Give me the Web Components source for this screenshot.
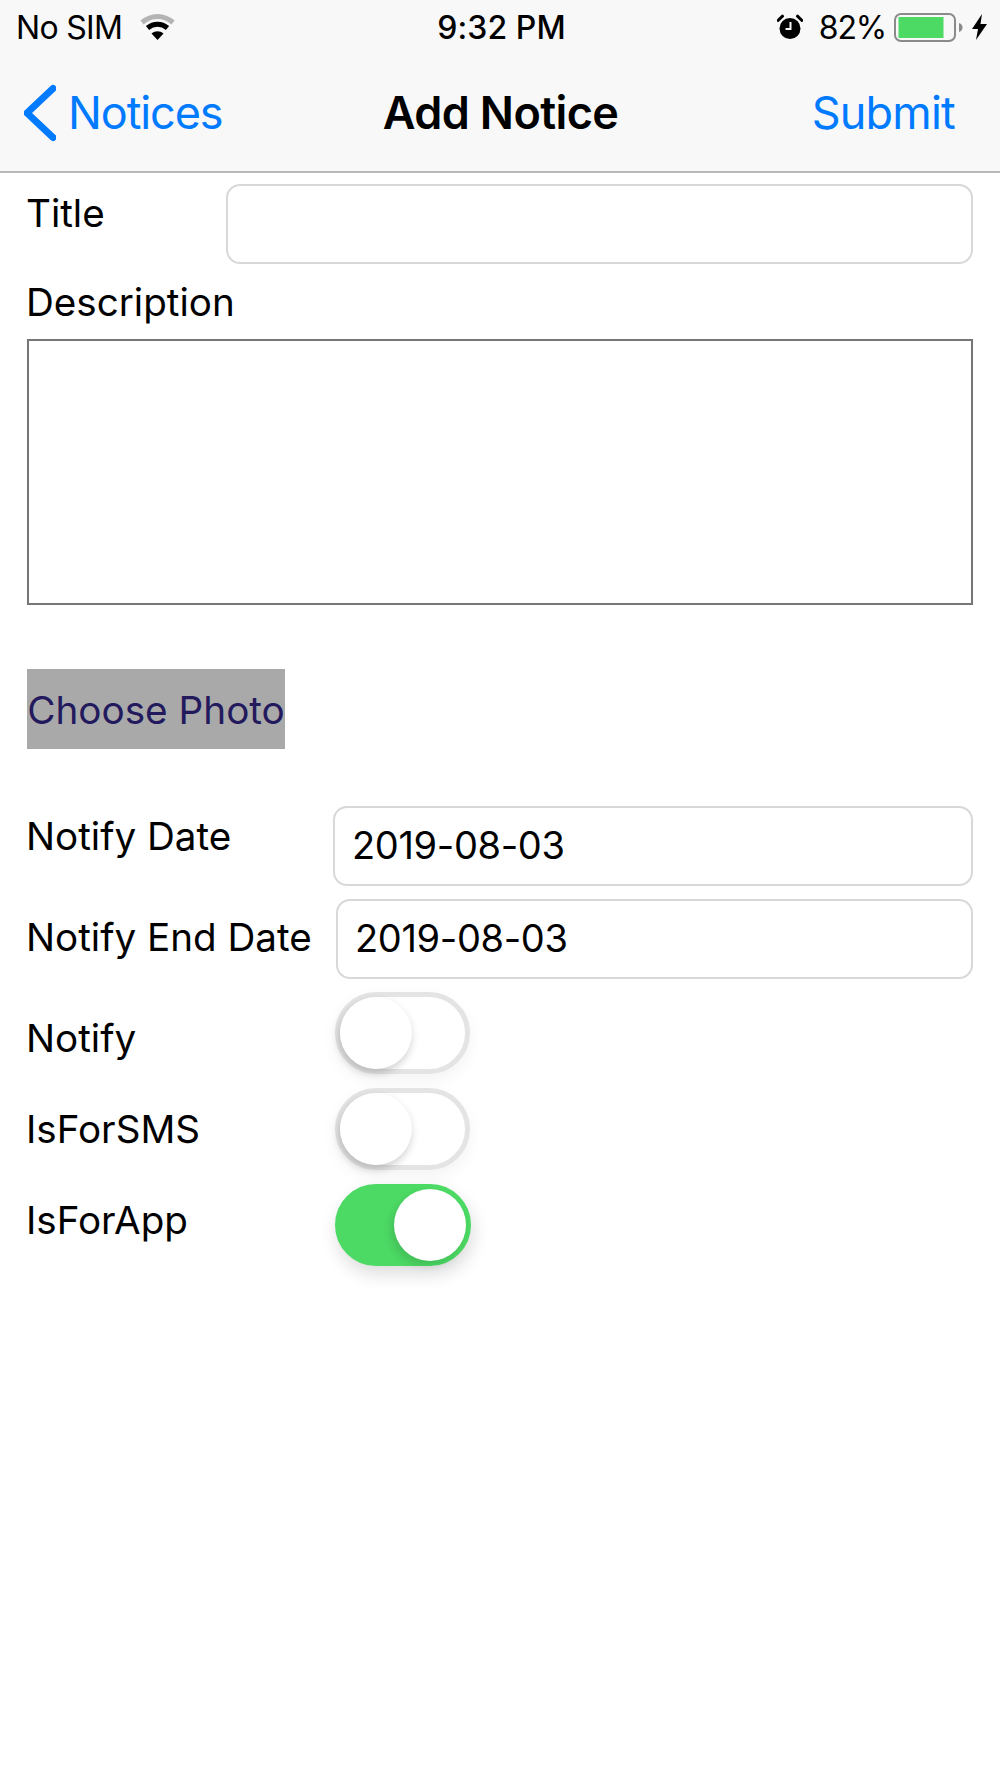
<!DOCTYPE html>
<html>
<head>
<meta charset="utf-8">
<title>Add Notice</title>
<style>
  html, body { margin: 0; background: #fff; }
  body { min-height: 100vh; font-family: Inter, "Liberation Sans", sans-serif; color: #000; }
</style>
</head>
<body>
<app-header></app-header>
<notice-form></notice-form>

<script>
class StatusBar extends HTMLElement {
  constructor() {
    super();
    this.attachShadow({ mode: 'open' }).innerHTML = `
      <style>
        :host { display: grid; grid-template-columns: 1fr auto 1fr; align-items: center; height: 54px; font-size: 32px; letter-spacing: -0.2px; padding: 0 13px 0 16px; }
        .left, .right { display: flex; align-items: center; }
        .right { justify-content: flex-end; }
        .sim { letter-spacing: -0.7px; }
        .time { font-weight: 500; letter-spacing: 0.1px; }
        svg { display: block; }
        .wifi { margin-left: 17px; }
        .pct { margin: 0 8px 0 16px; letter-spacing: -1.2px; }
        .bolt { margin-left: 9px; }
      </style>
      <div class="left">
        <span class="sim">No SIM</span>
        <svg class="wifi" width="37" height="28" viewBox="0 0 37 28">
          <path d="M3 9.5C12.5 1.5 24.5 1.5 34 9.5" fill="none" stroke="#b4b4b4" stroke-width="5"/>
          <path d="M8.5 15C14.5 10 22.5 10 28.5 15" fill="none" stroke="#000" stroke-width="5"/>
          <path d="M12.5 20.5C16.5 17.5 20.5 17.5 24.5 20.5L18.5 27Z" fill="#000"/>
        </svg>
      </div>
      <span class="time">9:32 PM</span>
      <div class="right">
        <svg width="26" height="26" viewBox="0 0 26 26">
          <circle cx="13" cy="14.5" r="10.5" fill="#000"/>
          <path d="M1 6.5 5.5 2.2M25 6.5 20.5 2.2" stroke="#000" stroke-width="3" stroke-linecap="round"/>
          <path d="M13.5 8v7H8.5" fill="none" stroke="#f8f8f8" stroke-width="2"/>
        </svg>
        <span class="pct">82%</span>
        <svg width="69" height="29" viewBox="0 0 69 29">
          <rect x="1" y="1" width="60" height="27" rx="6" fill="none" stroke="#8a8a8a" stroke-width="2"/>
          <rect x="4.5" y="4" width="45" height="21" fill="#4cd964"/>
          <path d="M65 10c2.500.8 3.500 2.500 3.500 4.500S67.500 18.200 65 19Z" fill="#8a8a8a"/>
        </svg>
        <svg class="bolt" width="15" height="26" viewBox="0 0 15 26">
          <path d="M10 0 0 15h6L4 26 15 10H8.500Z" fill="#000"/>
        </svg>
      </div>`;
  }
}

class NavBar extends HTMLElement {
  constructor() {
    super();
    this.attachShadow({ mode: 'open' }).innerHTML = `
      <style>
        :host { display: grid; grid-template-columns: 1fr auto 1fr; align-items: center; height: 117px; padding: 0 45px 0 24px; font-size: 45px; color: #007aff; letter-spacing: -0.6px; }
        .back { display: flex; align-items: center; gap: 12px; letter-spacing: -1.1px; }
        svg { display: block; }
        .title { color: #000; font-weight: 600; padding-left: 22px; }
        .action { text-align: right; letter-spacing: -0.8px; }
      </style>
      <div class="back">
        <svg width="32" height="58" viewBox="0 0 32 58">
          <path d="M29 4.500 3 29l26 24.500" fill="none" stroke="#007aff" stroke-width="7" stroke-linecap="round" stroke-linejoin="round"/>
        </svg>
        <span><slot name="back"></slot></span>
      </div>
      <div class="title"><slot name="title"></slot></div>
      <div class="action"><slot name="action"></slot></div>`;
  }
}

class AppHeader extends HTMLElement {
  constructor() {
    super();
    this.attachShadow({ mode: 'open' }).innerHTML = `
      <style>
        :host { display: block; background: #f8f8f8; border-bottom: 2px solid #b8b8b8; }
      </style>
      <status-bar></status-bar>
      <nav-bar>
        <span slot="back">Notices</span>
        <span slot="title">Add Notice</span>
        <span slot="action">Submit</span>
      </nav-bar>`;
  }
}

class TextField extends HTMLElement {
  constructor() {
    super();
    this.attachShadow({ mode: 'open' }).innerHTML = `
      <style>
        :host { display: flex; align-items: center; box-sizing: border-box; height: 80px; border: 2px solid #d8d8d8; border-radius: 14px; padding: 0 17px 2px 17px; font-size: 38px; letter-spacing: -0.35px; background: #fff; }
      </style>
      <slot></slot>`;
  }
}

class PhotoButton extends HTMLElement {
  constructor() {
    super();
    this.attachShadow({ mode: 'open' }).innerHTML = `
      <style>
        :host { display: flex; align-items: center; justify-content: center; box-sizing: border-box; width: 258px; height: 80px; padding-top: 2px; background: #a9a9a9; color: #231a5e; font-size: 38.7px; white-space: nowrap; }
      </style>
      <slot></slot>`;
  }
}

class ToggleSwitch extends HTMLElement {
  constructor() {
    super();
    this.attachShadow({ mode: 'open' }).innerHTML = `
      <style>
        :host { display: block; box-sizing: border-box; width: 135px; height: 82px; border-radius: 41px; border: 5px solid #e4e4e4; background: #fff; box-shadow: 0 6px 16px rgba(0,0,0,.05); position: relative; }
        :host([on]) { width: 136px; border-color: #4cd964; background: #4cd964; box-shadow: 2px 8px 18px rgba(0,0,0,.14); }
        .knob { position: absolute; left: 0; top: 0; width: 72px; height: 72px; border-radius: 50%; background: #fff; box-shadow: -1px 4px 8px rgba(0,0,0,.2); }
        :host([on]) .knob { left: auto; right: 0; box-shadow: -3px 5px 8px rgba(0,0,0,.12); }
      </style>
      <div class="knob"></div>`;
  }
}

class FormRow extends HTMLElement {
  constructor() {
    super();
    this.attachShadow({ mode: 'open' }).innerHTML = `
      <style>
        :host { display: flex; align-items: flex-start; font-size: 38.6px; line-height: 46px; }
        .label { flex: none; box-sizing: border-box; width: var(--label-width, 309px); margin-left: -1px; padding-top: var(--label-top, 0); white-space: nowrap; }
        .control { flex: 1; min-width: 0; }
      </style>
      <div class="label"><slot name="label"></slot></div>
      <div class="control"><slot></slot></div>`;
  }
}

class NoticeForm extends HTMLElement {
  constructor() {
    super();
    this.attachShadow({ mode: 'open' }).innerHTML = `
      <style>
        :host { display: block; padding: 11px 27px 120px; }
        .desc-label { font-size: 38.6px; line-height: 46px; margin: 15px 0 0 -1px; }
        .desc-box { box-sizing: border-box; height: 266px; margin-top: 14px; border: 2.5px solid #767676; background: #fff; }
        photo-button { margin-top: 64px; }
        .date-one { margin-top: 57px; --label-width: 307px; --label-top: 7px; }
        .date-two { margin-top: 13px; --label-width: 310px; --label-top: 15px; }
        .sw-one { margin-top: 13px; --label-top: 23px; }
        .sw-two { margin-top: 14px; --label-top: 18px; }
        .sw-three { margin-top: 14px; --label-top: 13px; }
      </style>
      <form-row style="--label-width: 200px; --label-top: 6px">
        <span slot="label">Title</span>
        <text-field></text-field>
      </form-row>
      <div class="desc-label">Description</div>
      <div class="desc-box"></div>
      <photo-button>Choose Photo</photo-button>
      <form-row class="date-one">
        <span slot="label">Notify Date</span>
        <text-field>2019-08-03</text-field>
      </form-row>
      <form-row class="date-two">
        <span slot="label">Notify End Date</span>
        <text-field>2019-08-03</text-field>
      </form-row>
      <form-row class="sw-one">
        <span slot="label">Notify</span>
        <toggle-switch></toggle-switch>
      </form-row>
      <form-row class="sw-two">
        <span slot="label">IsForSMS</span>
        <toggle-switch></toggle-switch>
      </form-row>
      <form-row class="sw-three">
        <span slot="label">IsForApp</span>
        <toggle-switch on></toggle-switch>
      </form-row>`;
  }
}

customElements.define('status-bar', StatusBar);
customElements.define('nav-bar', NavBar);
customElements.define('app-header', AppHeader);
customElements.define('text-field', TextField);
customElements.define('photo-button', PhotoButton);
customElements.define('toggle-switch', ToggleSwitch);
customElements.define('form-row', FormRow);
customElements.define('notice-form', NoticeForm);
</script>
</body>
</html>
